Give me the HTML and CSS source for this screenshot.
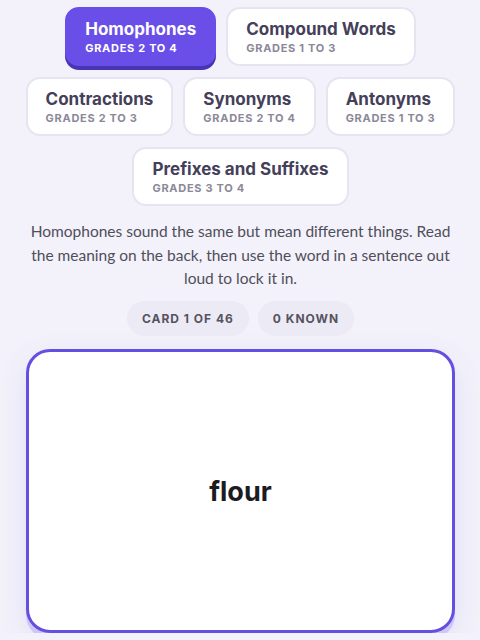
FILE: index.html
```html
<!DOCTYPE html>
<html lang="en">
<head>
  <meta charset="UTF-8">
  <title>Word Study Flashcards</title>
  <link rel="stylesheet" href="styles.css">
</head>
<body>
  <div class="app">
    <div class="decks">
      <button class="deck active">
        <span class="deck-name">Homophones</span>
        <span class="deck-grades">Grades 2 to 4</span>
      </button>
      <button class="deck">
        <span class="deck-name">Compound Words</span>
        <span class="deck-grades">Grades 1 to 3</span>
      </button>
      <button class="deck">
        <span class="deck-name">Contractions</span>
        <span class="deck-grades">Grades 2 to 3</span>
      </button>
      <button class="deck">
        <span class="deck-name">Synonyms</span>
        <span class="deck-grades">Grades 2 to 4</span>
      </button>
      <button class="deck">
        <span class="deck-name">Antonyms</span>
        <span class="deck-grades">Grades 1 to 3</span>
      </button>
      <button class="deck">
        <span class="deck-name">Prefixes and Suffixes</span>
        <span class="deck-grades">Grades 3 to 4</span>
      </button>
    </div>

    <p class="tip">Homophones sound the same but mean different things. Read the meaning on the back, then use the word in a sentence out loud to lock it in.</p>

    <div class="stats">
      <span class="chip">Card 1 of 46</span>
      <span class="chip">0 known</span>
    </div>

    <div class="card">
      <div class="word">flour</div>
    </div>
  </div>
</body>
</html>
```

FILE: styles.css
```css
body {
  margin: 0;
  background: #f3f2fa;
  font-family: "Lato", "Open Sans", sans-serif;
  color: #26242e;
}

.app {
  padding: 7px 25px 0 26px;
}

.decks {
  display: flex;
  flex-wrap: wrap;
  justify-content: center;
  gap: 11px 10px;
  margin: 0 -8px;
}

.deck {
  display: flex;
  flex-direction: column;
  align-items: flex-start;
  padding: 9px 18px 8px;
  background: #fff;
  border: 2px solid #e6e4f0;
  border-radius: 14px;
  font-family: "Inter", sans-serif;
  cursor: pointer;
}

.deck-name {
  font-size: 17px;
  line-height: 22px;
  font-weight: 700;
  color: #45405a;
}

.deck-grades {
  font-size: 11px;
  line-height: 16px;
  font-weight: 700;
  text-transform: uppercase;
  letter-spacing: 0.7px;
  color: #8b8898;
}

.deck.active {
  background: #6a4ee8;
  border-color: #6a4ee8;
  box-shadow: 0 4px 0 #4834b4;
}

.deck.active .deck-name,
.deck.active .deck-grades {
  color: #fff;
}

.tip {
  margin: 14px -2px 0;
  text-align: center;
  font-size: 15.5px;
  line-height: 23.5px;
  color: #504e5a;
}

.stats {
  display: flex;
  justify-content: center;
  gap: 9px;
  margin-top: 10px;
}

.chip {
  padding: 0 15px;
  height: 35px;
  line-height: 35px;
  border-radius: 18px;
  background: #ecebf5;
  font-family: "Inter", sans-serif;
  font-size: 12px;
  font-weight: 700;
  letter-spacing: 1px;
  text-transform: uppercase;
  color: #56535f;
}

.card {
  display: flex;
  align-items: center;
  justify-content: center;
  height: 278px;
  margin-top: 13px;
  background: #fff;
  border: 3px solid #6450e0;
  border-radius: 24px;
  box-shadow: 0 6px 0 #cfc6f4, 0 10px 30px rgba(100, 80, 220, 0.12);
}

.word {
  font-family: "Inter", sans-serif;
  font-size: 27px;
  font-weight: 700;
  color: #1c1b22;
  margin-top: 1px;
}
```
